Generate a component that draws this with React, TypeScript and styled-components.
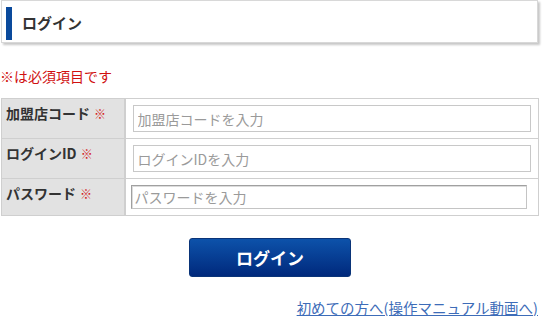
import styled, { createGlobalStyle } from "styled-components";

const GlobalStyle = createGlobalStyle`
  html, body {
    margin: 0;
    padding: 0;
    background: #fff;
  }
  body {
    font-family: "Noto Sans CJK JP", "Noto Sans", sans-serif;
    color: #333;
  }
`;

const Container = styled.div`
  width: 538px;
  margin-left: 1px;
`;

const Header = styled.header`
  height: 43px;
  box-sizing: border-box;
  width: 537px;
  border: 1px solid #d8d8d8;
  box-shadow: 2px 2px 2px #c8c8c8;
  padding: 6px 4px;
`;

const Title = styled.h1`
  margin: 0;
  height: 33px;
  line-height: 31px;
  border-left: 6px solid #0a4a9c;
  padding-left: 10px;
  font-size: 15px;
  font-weight: bold;
  color: #333;
`;

const Note = styled.p`
  margin: 24px 0 0 -1px;
  height: 31px;
  font-size: 14px;
  line-height: 18px;
  color: #d01010;
`;

const FormTable = styled.table`
  width: 538px;
  table-layout: fixed;
  border-collapse: collapse;
  border: 1px solid #cfcfcf;
`;

const LabelCol = styled.col`
  width: 123px;
`;

const Row = styled.tr<{ $h: number }>`
  height: ${(p) => p.$h}px;
`;

const Label = styled.th`
  background: #e2e2e2;
  border: 1px solid #cfcfcf;
  border-right-width: 2px;
  text-align: left;
  vertical-align: top;
  padding: 4px 4px;
  line-height: 20px;
  font-size: 14px;
  font-weight: bold;
  color: #333;
  white-space: nowrap;
`;

const Required = styled.span`
  color: #d41a1a;
  font-size: 12px;
  font-weight: bold;
  margin-left: 4px;
`;

const Field = styled.td<{ $pad: string }>`
  border: 1px solid #cfcfcf;
  padding: ${(p) => p.$pad};
  vertical-align: top;
`;

const TextInput = styled.input`
  display: block;
  box-sizing: border-box;
  width: 398px;
  height: 27px;
  border: 1px solid #c8c8c8;
  padding: 0 4px;
  font-family: inherit;
  font-size: 14px;
  color: #333;
  outline: none;
  &::placeholder {
    color: #9a9a9a;
  }
`;

const PlainInput = styled.input`
  display: block;
  box-sizing: border-box;
  width: 396px;
  height: 24px;
  border: 1px solid #a0a0a0;
  border-right-color: #c4c4c4;
  border-bottom-color: #c4c4c4;
  box-shadow: inset 1px 1px 0 #dcdcdc;
  padding: 0 3px;
  font-family: inherit;
  font-size: 14px;
  outline: none;
  &::placeholder {
    color: #9a9a9a;
  }
`;

const Actions = styled.div`
  display: flex;
  justify-content: center;
  padding-top: 22px;
`;

const LoginButton = styled.button`
  width: 162px;
  height: 39px;
  border: 1px solid #0a3478;
  border-radius: 3px;
  background: linear-gradient(#0d52aa, #00297c);
  color: #fff;
  font-family: inherit;
  font-size: 17px;
  font-weight: bold;
  cursor: pointer;
`;

const Footer = styled.div`
  display: flex;
  justify-content: flex-end;
  padding: 23px 1px 0 0;
`;

const ManualLink = styled.a`
  color: #3d6cb8;
  font-size: 14.5px;
  line-height: 16px;
  text-decoration: underline;
`;

export default function App() {
  return (
    <Container>
      <GlobalStyle />
      <Header>
        <Title>ログイン</Title>
      </Header>
      <Note>※は必須項目です</Note>
      <FormTable>
        <colgroup>
          <LabelCol />
          <col />
        </colgroup>
        <tbody>
          <Row $h={40}>
            <Label>
              加盟店コード<Required>※</Required>
            </Label>
            <Field $pad="6px 7px">
              <TextInput placeholder="加盟店コードを入力" />
            </Field>
          </Row>
          <Row $h={40}>
            <Label>
              ログインID<Required>※</Required>
            </Label>
            <Field $pad="6px 7px">
              <TextInput placeholder="ログインIDを入力" />
            </Field>
          </Row>
          <Row $h={36}>
            <Label>
              パスワード<Required>※</Required>
            </Label>
            <Field $pad="6px 5px">
              <PlainInput type="password" placeholder="パスワードを入力" />
            </Field>
          </Row>
        </tbody>
      </FormTable>
      <Actions>
        <LoginButton>ログイン</LoginButton>
      </Actions>
      <Footer>
        <ManualLink href="#">初めての方へ(操作マニュアル動画へ)</ManualLink>
      </Footer>
    </Container>
  );
}
